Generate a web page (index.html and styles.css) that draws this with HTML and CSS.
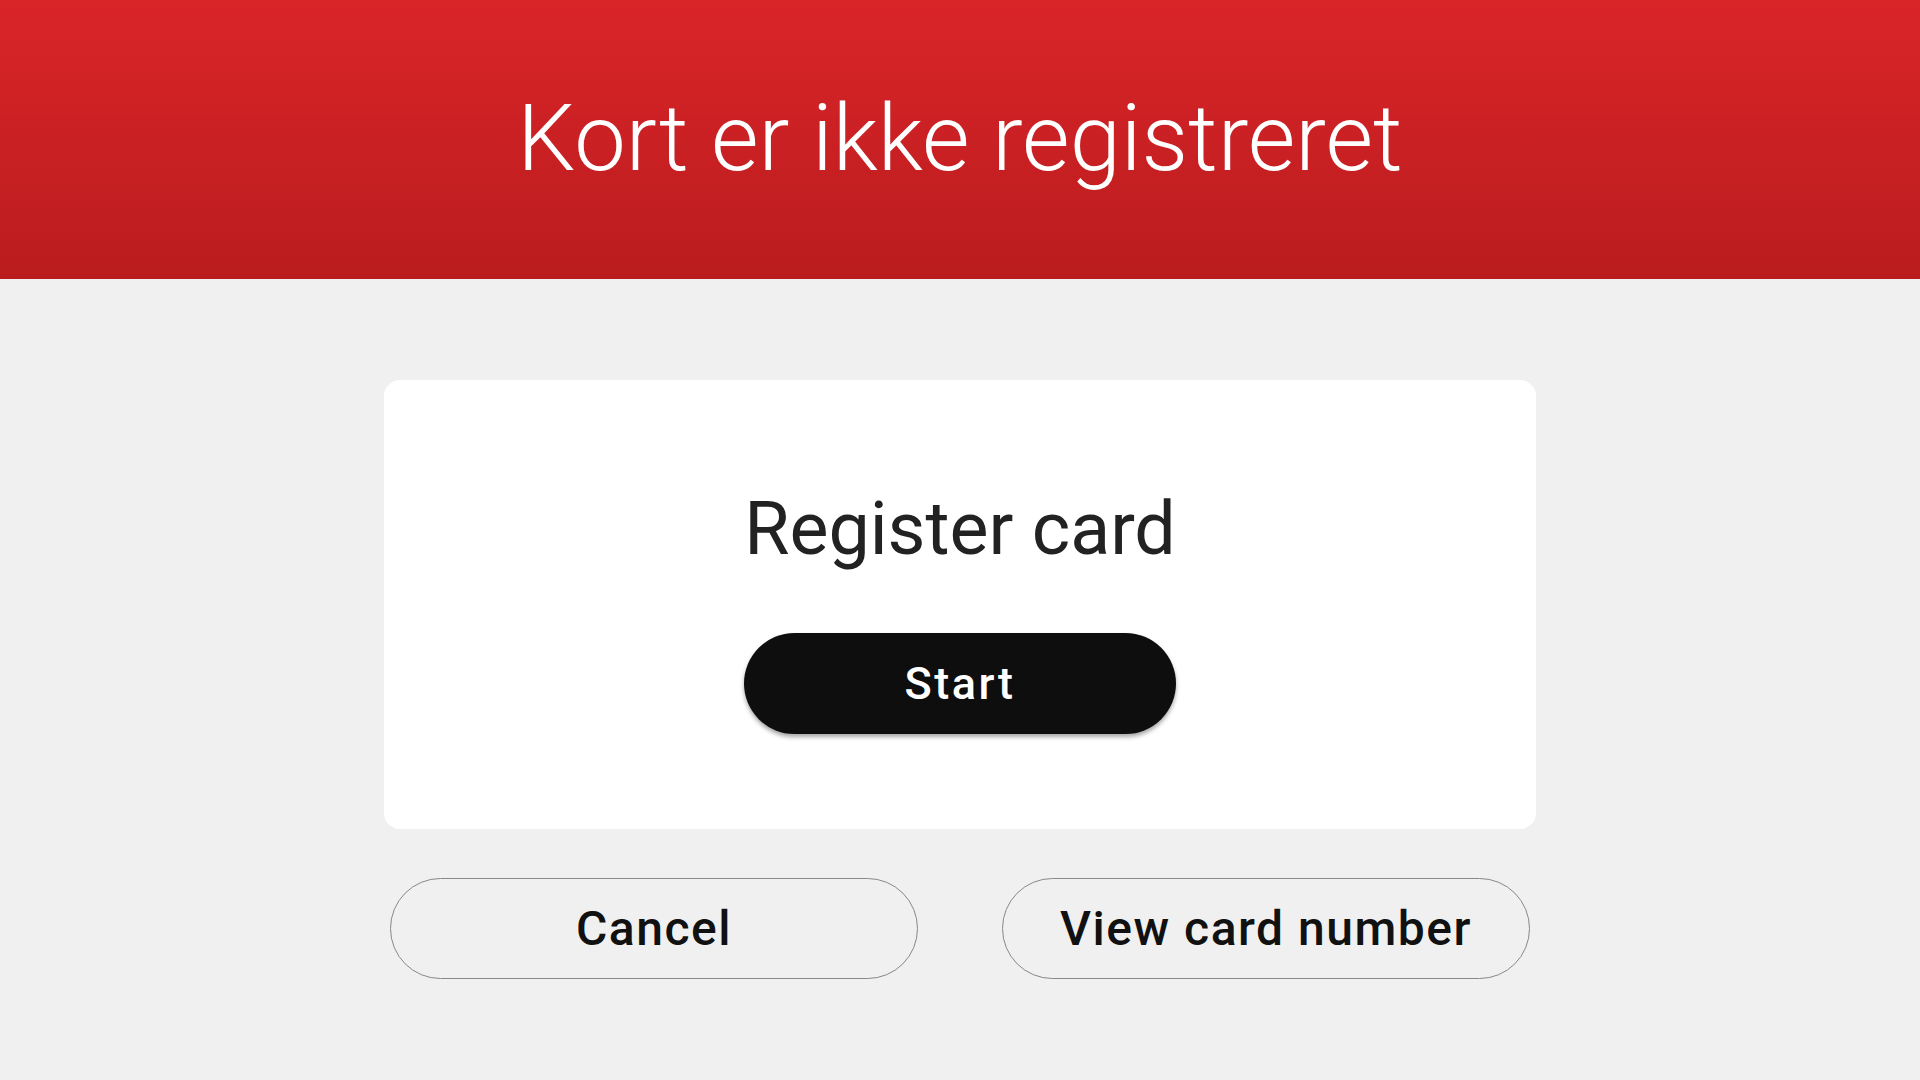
FILE: index.html
```html
<!DOCTYPE html>
<html lang="da">
<head>
  <meta charset="UTF-8">
  <meta name="viewport" content="width=device-width, initial-scale=1.0">
  <title>Kort er ikke registreret</title>
  <link rel="stylesheet" href="styles.css">
</head>
<body>
  <header class="top-bar">
    <h1>Kort er ikke registreret</h1>
  </header>
  <main class="content">
    <section class="register-card">
      <h2>Register card</h2>
      <button class="start-button">Start</button>
    </section>
    <div class="action-row">
      <button class="outline-button">Cancel</button>
      <button class="outline-button">View card number</button>
    </div>
  </main>
</body>
</html>
```
FILE: styles.css
```css
body {
  font-family: Roboto, "Noto Sans", Arial, sans-serif;
  margin: 0;
  background-color: #f0f0f0;
  color: #111;
}
.top-bar {
  height: 279px;
  box-sizing: border-box;
  padding-top: 93px;
  background: linear-gradient(to bottom, #da2529, #ba1c1e);
  text-align: center;
}
.top-bar h1 {
  margin: 0;
  font-size: 92px;
  line-height: 1;
  font-weight: 300;
  color: #fff;
}
.content {
  width: 1152px;
  margin: 101px auto 0;
}
.register-card {
  display: flex;
  flex-direction: column;
  align-items: center;
  height: 449px;
  box-sizing: border-box;
  padding-top: 113px;
  background: #fff;
  border-radius: 16px;
}
.register-card h2 {
  margin: 0 0 66px;
  font-size: 73.5px;
  line-height: 1;
  font-weight: 400;
  color: #222;
}
.start-button {
  width: 432px;
  height: 101px;
  border: none;
  border-radius: 51px;
  background: #0e0e0e;
  color: #fff;
  font-family: inherit;
  font-size: 45px;
  font-weight: 500;
  letter-spacing: 2.5px;
  box-shadow: 0 3px 4px rgba(0, 0, 0, 0.35);
  cursor: pointer;
}
.action-row {
  display: flex;
  justify-content: space-between;
  padding: 0 6px;
  margin-top: 49px;
}
.outline-button {
  width: 528px;
  height: 101px;
  border: 1px solid #888;
  border-radius: 51px;
  background: transparent;
  color: #111;
  font-family: inherit;
  font-size: 48px;
  font-weight: 500;
  letter-spacing: 1.5px;
  cursor: pointer;
}
```
